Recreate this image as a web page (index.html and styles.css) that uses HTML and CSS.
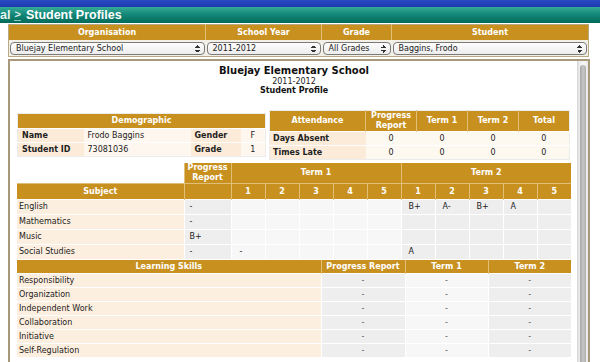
FILE: index.html
```html
<!DOCTYPE html>
<html lang="en">
<head>
    <meta charset="UTF-8">
    <title>Student Profiles</title>
    <link rel="stylesheet" href="styles.css">
</head>
<body>
    <div class="topstrip"></div>
    <div class="titlebar">
        <span class="crumb">al</span>
        <span class="sep">&gt;</span>
        <span class="page">Student Profiles</span>
    </div>

    <table class="filters">
        <tr>
            <th class="c-org">Organisation</th>
            <th class="c-year">School Year</th>
            <th class="c-grade">Grade</th>
            <th class="c-stu">Student</th>
        </tr>
        <tr>
            <td><div class="select">Bluejay Elementary School<span class="arrows"></span></div></td>
            <td><div class="select">2011-2012<span class="arrows"></span></div></td>
            <td><div class="select">All Grades<span class="arrows"></span></div></td>
            <td><div class="select">Baggins, Frodo<span class="arrows"></span></div></td>
        </tr>
    </table>

    <div class="content">
        <div class="inner">
            <div class="heading">
                <div class="school">Bluejay Elementary School</div>
                <div class="year">2011-2012</div>
                <div class="doc">Student Profile</div>
            </div>

            <div class="toprow">
                <table class="demo">
                    <colgroup>
                        <col class="d-lbl"><col class="d-val"><col class="d-lbl2"><col class="d-val2">
                    </colgroup>
                    <tr><th colspan="4">Demographic</th></tr>
                    <tr>
                        <td class="lbl">Name</td><td class="val">Frodo Baggins</td>
                        <td class="lbl">Gender</td><td class="val mid">F</td>
                    </tr>
                    <tr>
                        <td class="lbl">Student ID</td><td class="val">73081036</td>
                        <td class="lbl">Grade</td><td class="val mid">1</td>
                    </tr>
                </table>

                <table class="attend">
                    <colgroup>
                        <col class="a1"><col class="a2"><col class="a2"><col class="a2"><col class="a2">
                    </colgroup>
                    <tr>
                        <th>Attendance</th>
                        <th>Progress<br>Report</th>
                        <th>Term 1</th>
                        <th>Term 2</th>
                        <th>Total</th>
                    </tr>
                    <tr>
                        <td class="lbl">Days Absent</td>
                        <td class="val">0</td><td class="val">0</td><td class="val">0</td><td class="val">0</td>
                    </tr>
                    <tr>
                        <td class="lbl">Times Late</td>
                        <td class="val">0</td><td class="val">0</td><td class="val">0</td><td class="val">0</td>
                    </tr>
                </table>
            </div>

            <table class="grades">
                <colgroup>
                    <col class="g-subj"><col class="g-pr">
                    <col class="g-n"><col class="g-n"><col class="g-n"><col class="g-n"><col class="g-n">
                    <col class="g-n"><col class="g-n"><col class="g-n"><col class="g-n"><col class="g-n">
                </colgroup>
                <tr class="h1">
                    <th class="blank"></th>
                    <th>Progress<br>Report</th>
                    <th colspan="5">Term 1</th>
                    <th colspan="5">Term 2</th>
                </tr>
                <tr class="h2">
                    <th>Subject</th><th></th>
                    <th>1</th><th>2</th><th>3</th><th>4</th><th>5</th>
                    <th>1</th><th>2</th><th>3</th><th>4</th><th>5</th>
                </tr>
                <tr>
                    <td class="subj">English</td><td class="pr">-</td>
                    <td class="t1"></td><td class="t1"></td><td class="t1"></td><td class="t1"></td><td class="t1"></td>
                    <td class="t2">B+</td><td class="t2">A-</td><td class="t2">B+</td><td class="t2">A</td><td class="t2"></td>
                </tr>
                <tr>
                    <td class="subj">Mathematics</td><td class="pr">-</td>
                    <td class="t1"></td><td class="t1"></td><td class="t1"></td><td class="t1"></td><td class="t1"></td>
                    <td class="t2"></td><td class="t2"></td><td class="t2"></td><td class="t2"></td><td class="t2"></td>
                </tr>
                <tr>
                    <td class="subj">Music</td><td class="pr">B+</td>
                    <td class="t1"></td><td class="t1"></td><td class="t1"></td><td class="t1"></td><td class="t1"></td>
                    <td class="t2"></td><td class="t2"></td><td class="t2"></td><td class="t2"></td><td class="t2"></td>
                </tr>
                <tr>
                    <td class="subj">Social Studies</td><td class="pr">-</td>
                    <td class="t1">-</td><td class="t1"></td><td class="t1"></td><td class="t1"></td><td class="t1"></td>
                    <td class="t2">A</td><td class="t2"></td><td class="t2"></td><td class="t2"></td><td class="t2"></td>
                </tr>
            </table>

            <table class="skills">
                <colgroup>
                    <col class="s-name"><col class="s-pr"><col class="s-t"><col class="s-t">
                </colgroup>
                <tr>
                    <th>Learning Skills</th><th>Progress Report</th><th>Term 1</th><th>Term 2</th>
                </tr>
                <tr><td class="subj">Responsibility</td><td class="pr">-</td><td class="t1">-</td><td class="t2">-</td></tr>
                <tr><td class="subj">Organization</td><td class="pr">-</td><td class="t1">-</td><td class="t2">-</td></tr>
                <tr><td class="subj">Independent Work</td><td class="pr">-</td><td class="t1">-</td><td class="t2">-</td></tr>
                <tr><td class="subj">Collaboration</td><td class="pr">-</td><td class="t1">-</td><td class="t2">-</td></tr>
                <tr><td class="subj">Initiative</td><td class="pr">-</td><td class="t1">-</td><td class="t2">-</td></tr>
                <tr><td class="subj">Self-Regulation</td><td class="pr">-</td><td class="t1">-</td><td class="t2">-</td></tr>
            </table>
        </div>
        <div class="scrollbar"><div class="thumb"></div></div>
    </div>
</body>
</html>
```

FILE: styles.css
```css
html,body{
    margin:0;
    padding:0;
    background:#fff;
    overflow:hidden;
}
body{
    font-family:"DejaVu Sans", Verdana, sans-serif;
    font-size:8px;
    color:#222;
}
table{
    border-collapse:collapse;
    table-layout:fixed;
}
th,td{
    padding:0;
    font-size:8px;
    line-height:10px;
}
th{
    background:#c8911f;
    color:#fff;
    font-weight:bold;
    text-align:center;
}

/* top bars */
.topstrip{
    height:7px;
    background:linear-gradient(#2a4ac4,#1d3aae);
}
.titlebar{
    height:16px;
    background:linear-gradient(#35ab97 0%,#14887a 45%,#046a58 100%);
    font-family:"Liberation Sans", Arial, sans-serif;
    font-weight:bold;
    font-size:12.5px;
    line-height:15px;
    color:#fff;
    white-space:nowrap;
    display:flex;
    align-items:center;
}
.crumb{
    color:#e8f4f0;
}
.sep{
    color:#d8ece6;
    margin:0 5px 0 4px;
    font-size:11px;
    border-bottom:1px solid #8cc8bc;
    line-height:11px;
}

/* filter table */
.filters{
    margin:1px 0 0 8px;
    width:579px;
    border:1px solid #b9a884;
    background:#f3f0e8;
}
.filters th{
    height:15px;
    border-left:1px solid #e2bf78;
}
.filters th:first-child{
    border-left:none;
}
.c-org{width:196px;}
.c-year{width:115px;}
.c-grade{width:69px;}
.c-stu{width:196px;}
.filters td{
    height:16px;
    padding:0 1px;
}
.select{
    position:relative;
    height:11px;
    border:1px solid #7a7a7a;
    border-radius:4px;
    background:linear-gradient(#fdfdfd,#ececec);
    padding:0 0 0 5px;
    line-height:11px;
    color:#222;
    white-space:nowrap;
    overflow:hidden;
}
.arrows{
    position:absolute;
    right:4px;
    top:2px;
    width:5px;
    height:8px;
    background:
        linear-gradient(to bottom right,transparent 50%,#333 50%) left top/3px 3px no-repeat,
        linear-gradient(to bottom left,transparent 50%,#333 50%) right top/2px 3px no-repeat,
        linear-gradient(to top right,transparent 50%,#333 50%) left bottom/3px 3px no-repeat,
        linear-gradient(to top left,transparent 50%,#333 50%) right bottom/2px 3px no-repeat;
}

/* content box */
.content{
    margin:2px 0 0 8px;
    width:582px;
    height:330px;
    border:2px solid #a8997a;
    box-sizing:border-box;
    display:flex;
}
.inner{
    flex:1;
    overflow:hidden;
    padding:0 0 0 7px;
}
.scrollbar{
    width:11px;
    background:linear-gradient(to right,#e2e2e2,#f4f4f4 30%,#f4f4f4 70%,#e6e6e6);
    border-left:1px solid #d8d8d8;
    box-sizing:border-box;
    padding:4px 2px 0 2px;
}
.thumb{
    height:100%;
    background:linear-gradient(to right,#a6a6a6,#c6c6c6 50%,#b0b0b0);
    border-radius:3px;
}
.heading{
    text-align:center;
    padding-top:4px;
    width:554px;
}
.school{
    font-size:10px;
    font-weight:bold;
    line-height:12px;
    color:#111;
}
.year{
    line-height:9px;
}
.doc{
    font-weight:bold;
    line-height:10px;
    color:#111;
}

/* demographic + attendance */
.toprow{
    display:flex;
    align-items:center;
    gap:3px;
    margin-top:14px;
    width:554px;
}
.demo{
    width:248px;
    border:1px solid #ececec;
}
.d-lbl{width:66px;}
.d-val{width:107px;}
.d-lbl2{width:50px;}
.d-val2{width:25px;}
.demo th{
    height:14px;
}
.demo td{
    height:13px;
    border-top:1px solid #fff;
}
.demo .lbl{
    background:#fcebd8;
    font-weight:bold;
    padding-left:4px;
}
.demo .val{
    background:#fdf7ef;
    padding-left:4px;
}
.demo .mid{
    text-align:center;
    padding-left:0;
}
.attend{
    width:301px;
    border:1px solid #ececec;
}
.a1{width:96px;}
.a2{width:51px;}
.attend th{
    height:20px;
    border-left:1px solid #e2bf78;
}
.attend th:first-child{
    border-left:none;
}
.attend td{
    height:13px;
    border-top:1px solid #fff;
}
.attend .lbl{
    background:#fcebd8;
    font-weight:bold;
    padding-left:3px;
}
.attend .val{
    background:#fdf8f0;
    text-align:center;
}

/* grades */
.grades{
    width:554px;
    margin-top:3px;
}
.g-subj{width:167px;}
.g-pr{width:47px;}
.g-n{width:34px;}
.grades th{
    border-left:1px solid #e2bf78;
}
.grades .h1 th{
    height:20px;
}
.grades .h1 .blank{
    background:#fff;
    border-left:none;
}
.grades .h2 th{
    height:15px;
    border-top:1px solid #e2bf78;
}
.grades .h2 th:first-child{
    border-left:none;
}
.grades td{
    height:14px;
    border-top:1px solid #fff;
    border-left:1px solid #fff;
}
.subj{
    background:#fdefdf;
    padding-left:2px;
}
.grades td.subj{
    border-left:none;
}
.grades .pr{
    background:#eeeeee;
    padding-left:5px;
}
.grades .t1{
    background:#f7f7f7;
    padding-left:8px;
}
.grades .t2{
    background:#eeeeee;
    padding-left:7px;
}

/* learning skills */
.skills{
    width:554px;
    margin-top:1px;
}
.s-name{width:304px;}
.s-pr{width:84px;}
.s-t{width:83px;}
.skills th{
    height:13px;
    border-left:1px solid #e2bf78;
}
.skills th:first-child{
    border-left:none;
}
.skills td{
    height:13px;
    border-top:1px solid #fff;
    border-left:1px solid #fff;
    text-align:center;
}
.skills td.subj{
    text-align:left;
    border-left:none;
}
.skills .pr,
.skills .t1,
.skills .t2{
    color:#555;
}
.skills .pr{background:#eeeeee;}
.skills .t1{background:#f7f7f7;}
.skills .t2{background:#eeeeee;}
```
